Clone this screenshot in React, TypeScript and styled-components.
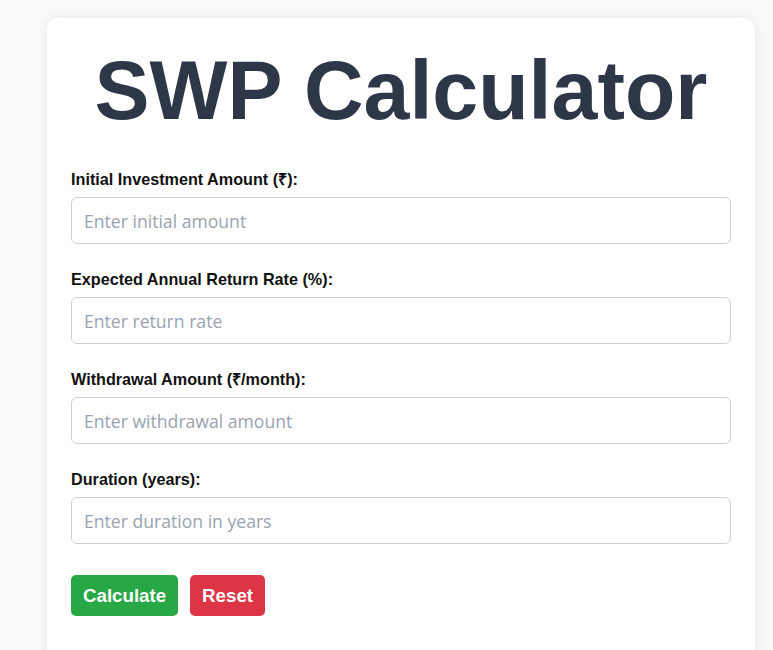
import React, { useState } from "react";
import styled, { createGlobalStyle } from "styled-components";

const GlobalStyle = createGlobalStyle`
  html, body { margin: 0; padding: 0; background: #f9f9f9; }
  body { font-family: "Liberation Sans", Arial, sans-serif; }
  * { box-sizing: border-box; }
`;

const Page = styled.div`
  padding: 18px 18px 0 47px;
`;

const Card = styled.div`
  width: 708px;
  min-height: 660px;
  background: #ffffff;
  border-radius: 12px;
  box-shadow: 0 0 12px rgba(0, 0, 0, 0.07);
  padding: 24px;
`;

const Title = styled.h1`
  margin: 0 0 32px;
  text-align: center;
  font-family: "Liberation Sans", Arial, sans-serif;
  font-weight: 700;
  font-size: 82.5px;
  line-height: 96px;
  color: #2d3748;
`;

const Field = styled.div`
  display: flex;
  flex-direction: column;
  margin-bottom: 26px;
`;

const Label = styled.label`
  font-size: 16.2px;
  line-height: 18px;
  font-weight: 700;
  color: #111111;
  margin-bottom: 9px;
`;

const Input = styled.input`
  width: 100%;
  height: 47px;
  padding: 0 12px;
  border: 1px solid #cfcfcf;
  border-radius: 6px;
  font-family: "Open Sans", "Noto Sans", sans-serif;
  font-size: 17.6px;
  color: #2d3748;
  background: #fff;
  outline: none;
  &::placeholder { color: #9aa3b0; }
`;

const ButtonRow = styled.div`
  display: flex;
  gap: 12px;
  padding-top: 5px;
`;

const Button = styled.button<{ $variant: "primary" | "danger" }>`
  height: 41px;
  padding: 0 12px;
  border: none;
  border-radius: 5px;
  font-family: "Liberation Sans", Arial, sans-serif;
  font-weight: 700;
  font-size: 18.7px;
  color: #fff;
  background: ${(p) => (p.$variant === "primary" ? "#28a745" : "#dc3545")};
  cursor: pointer;
`;

const fields = [
  { label: "Initial Investment Amount (₹):", placeholder: "Enter initial amount" },
  { label: "Expected Annual Return Rate (%):", placeholder: "Enter return rate" },
  { label: "Withdrawal Amount (₹/month):", placeholder: "Enter withdrawal amount" },
  { label: "Duration (years):", placeholder: "Enter duration in years" },
];

export default function App() {
  const [values, setValues] = useState<string[]>(["", "", "", ""]);
  return (
    <>
      <GlobalStyle />
      <Page>
        <Card>
          <Title>SWP Calculator</Title>
          {fields.map((f, i) => (
            <Field key={f.label}>
              <Label>{f.label}</Label>
              <Input
                type="number"
                placeholder={f.placeholder}
                value={values[i]}
                onChange={(e) => {
                  const next = [...values];
                  next[i] = e.target.value;
                  setValues(next);
                }}
              />
            </Field>
          ))}
          <ButtonRow>
            <Button $variant="primary">Calculate</Button>
            <Button $variant="danger" onClick={() => setValues(["", "", "", ""])}>
              Reset
            </Button>
          </ButtonRow>
        </Card>
      </Page>
    </>
  );
}
